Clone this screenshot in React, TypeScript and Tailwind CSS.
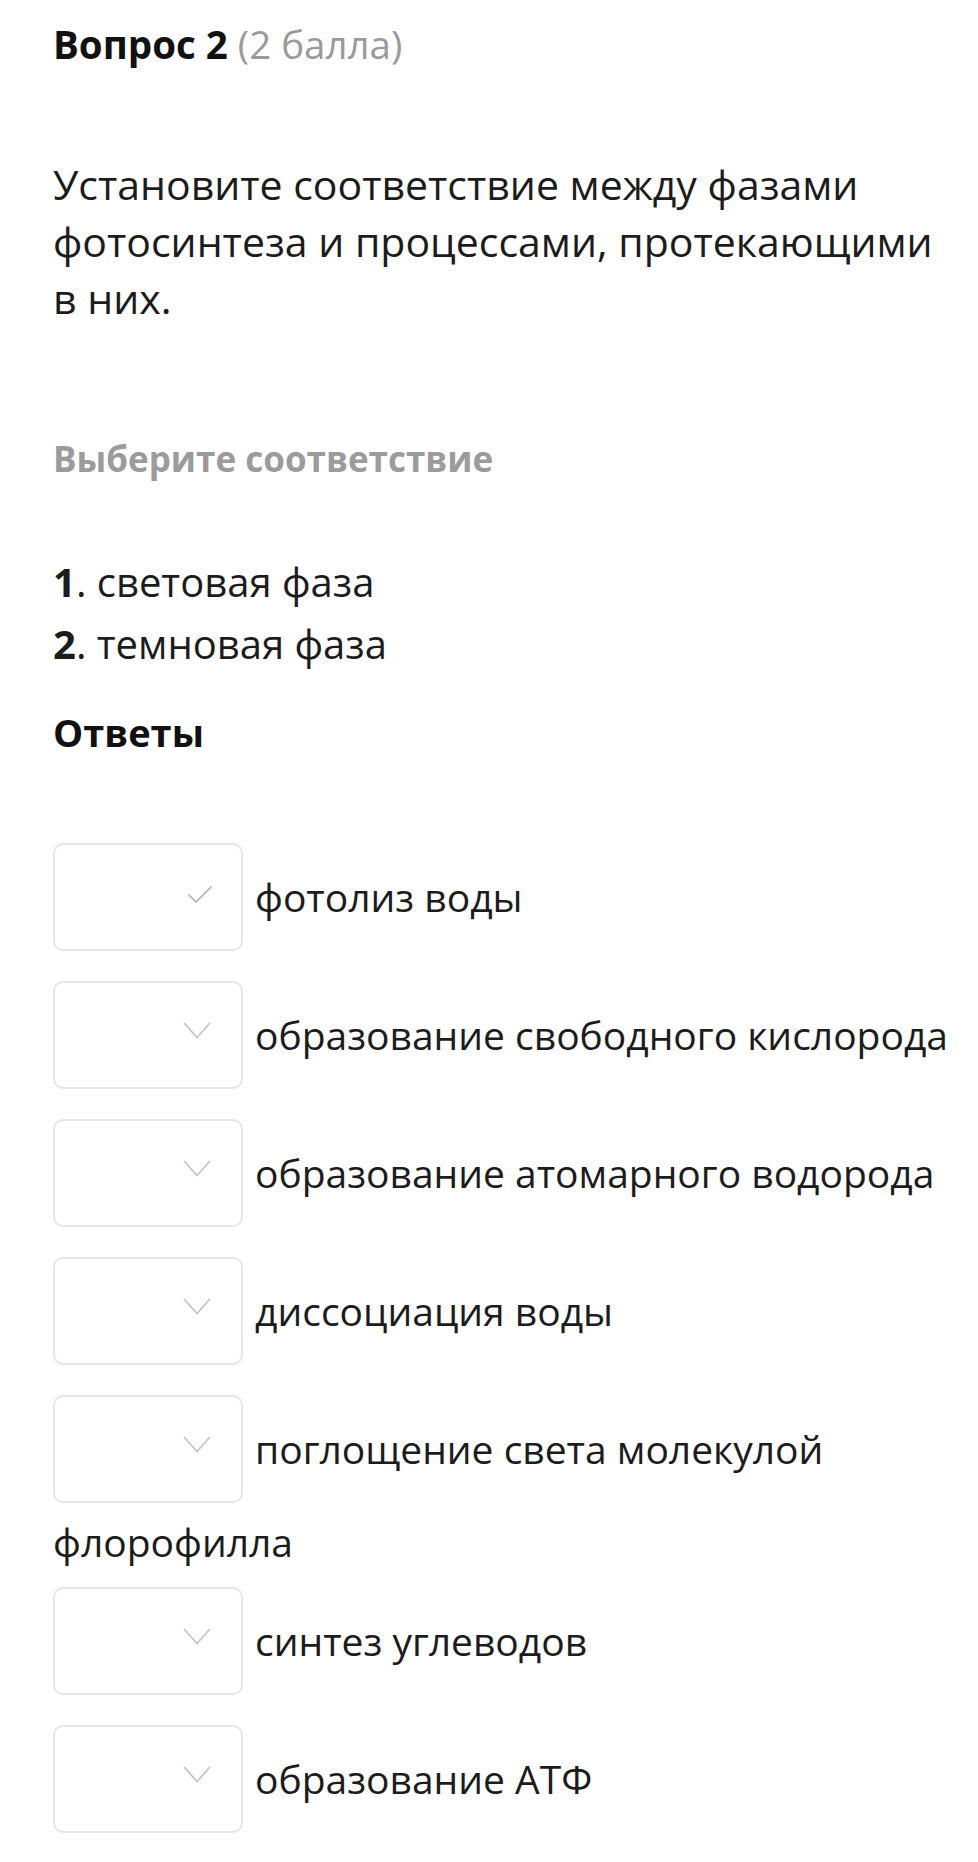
import React from "react";

function Chevron({ check = false }: { check?: boolean }) {
  if (check) {
    return (
      <svg width="26" height="20" viewBox="0 0 26 20" className="absolute right-[28px] top-[40px]" fill="none">
        <polyline points="2,10 9,17 24,2" stroke="#bdbdbd" strokeWidth="1.8" strokeLinecap="round" strokeLinejoin="round" />
      </svg>
    );
  }
  return (
    <svg width="28" height="18" viewBox="0 0 28 18" className="absolute right-[30px] top-[39px]" fill="none">
      <polyline points="1.5,1.5 14,15.5 26.5,1.5" stroke="#c4c4c4" strokeWidth="1.8" strokeLinecap="round" strokeLinejoin="round" />
    </svg>
  );
}

function Box({ check = false }: { check?: boolean }) {
  return (
    <div className="relative w-[190px] h-[108px] shrink-0 rounded-[10px] border-2 border-[#e6e6e6] bg-white">
      <Chevron check={check} />
    </div>
  );
}

function Row({ text, check = false, tail }: { text: string; check?: boolean; tail?: string }) {
  return (
    <div className="mb-[30px]">
      <div className="flex items-center">
        <Box check={check} />
        <span className="ml-[12px] whitespace-nowrap text-[39px] leading-[54px] text-[#1c1c1c]">{text}</span>
      </div>
      {tail && (
        <div className="mt-[12px] -mb-[12px] text-[39px] leading-[54px] text-[#1c1c1c]">{tail}</div>
      )}
    </div>
  );
}

export default function App() {
  const rows: { text: string; check?: boolean; tail?: string }[] = [
    { text: "фотолиз воды", check: true },
    { text: "образование свободного кислорода" },
    { text: "образование атомарного водорода" },
    { text: "диссоциация воды" },
    { text: "поглощение света молекулой", tail: "флорофилла" },
    { text: "синтез углеводов" },
    { text: "образование АТФ" },
  ];
  return (
    <div
      className="w-[978px] min-h-[1862px] overflow-hidden bg-white pl-[53px] pr-[30px] pt-[20px] text-[#1c1c1c]"
      style={{ fontFamily: '"Open Sans", "Noto Sans", sans-serif' }}
    >
      <div className="text-[38.5px] leading-[48px]">
        <span className="font-bold text-[#111]">Вопрос 2</span>{" "}
        <span className="text-[#9a9a9a]">(2 балла)</span>
      </div>

      <p className="mt-[88px] text-[41px] leading-[57px]">
        Установите соответствие между фазами фотосинтеза и процессами, протекающими в них.
      </p>

      <div className="mt-[108px] text-[35px] leading-[48px] font-bold text-[#9b9b9b]">
        Выберите соответствие
      </div>

      <div className="mt-[68px] text-[40px] leading-[62px]">
        <div>
          <span className="font-bold">1</span>. световая фаза
        </div>
        <div>
          <span className="font-bold">2</span>. темновая фаза
        </div>
      </div>

      <div className="mt-[32px] text-[38px] leading-[50px] font-bold text-[#111]">Ответы</div>

      <div className="mt-[86px]">
        {rows.map((r, i) => (
          <Row key={i} text={r.text} check={r.check} tail={r.tail} />
        ))}
      </div>
    </div>
  );
}
